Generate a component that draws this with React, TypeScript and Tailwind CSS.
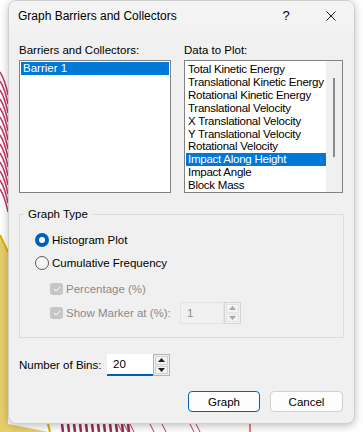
import { useState } from 'react'

const DATA_ITEMS = [
  'Total Kinetic Energy',
  'Translational Kinetic Energy',
  'Rotational Kinetic Energy',
  'Translational Velocity',
  'X Translational Velocity',
  'Y Translational Velocity',
  'Rotational Velocity',
  'Impact Along Height',
  'Impact Angle',
  'Block Mass',
]

const FONT = { fontFamily: '"Liberation Sans", Arial, sans-serif' }

function Backdrop() {
  // the plot window peeking out behind the dialog
  return (
    <svg className="absolute inset-0" width="363" height="432" viewBox="0 0 363 432">
      <rect width="363" height="432" fill="#ffffff" />
      <path d="M0 235 L8 250 L8 424 Q30 428 48 432 L0 432 Z" fill="#e6cf6a" />
      <path d="M0 235 L8 252" stroke="#d9b400" strokeWidth="2" />
      {Array.from({ length: 14 }).map((_, i) => (
        <path
          key={i}
          d={`M0 ${72 + i * 9} Q5 ${80 + i * 9} 8 ${95 + i * 9}`}
          stroke="#c8346a"
          strokeWidth="1.5"
          fill="none"
        />
      ))}
      <path d="M48 424 L50 432" stroke="#d9b400" strokeWidth="2" />
      {Array.from({ length: 12 }).map((_, i) => (
        <path
          key={'b' + i}
          d={`M${62 + i * 6} 424 L${63 + i * 6} 432`}
          stroke="#9b2a55"
          strokeWidth="2.5"
        />
      ))}
      {[118, 124, 130, 150, 162, 190, 196].map(x => (
        <path key={'c' + x} d={`M${x} 424 Q${x + 2} 428 ${x + 4} 432`} stroke="#c8346a" strokeWidth="1" fill="none" />
      ))}
      <path d="M250 424 L250 432" stroke="#d00000" strokeWidth="1" />
    </svg>
  )
}

function Spinner({ disabled }: { disabled?: boolean }) {
  const arrow = disabled ? 'fill-[#a8a8a8]' : 'fill-[#202020]'
  return (
    <div className={`flex flex-col w-[17px] h-full border ${disabled ? 'border-[#d5d5d5]' : 'border-[#b4b4b4]'} bg-[#f0f0f0] p-[1px] gap-[1px]`}>
      <div className={`flex-1 flex items-center justify-center border ${disabled ? 'border-[#e3e3e3]' : 'border-[#cfcfcf]'} bg-[#f3f3f3]`}>
        <svg width="7" height="4" viewBox="0 0 7 4" className={arrow}><path d="M3.5 0 L7 4 L0 4 Z" /></svg>
      </div>
      <div className={`flex-1 flex items-center justify-center border ${disabled ? 'border-[#e3e3e3]' : 'border-[#cfcfcf]'} bg-[#f3f3f3]`}>
        <svg width="7" height="4" viewBox="0 0 7 4" className={arrow}><path d="M0 0 L7 0 L3.5 4 Z" /></svg>
      </div>
    </div>
  )
}

function DisabledCheck({ label }: { label: string }) {
  return (
    <div className="flex items-center gap-[3px] whitespace-nowrap">
      <div className="w-[13px] h-[12px] rounded-[3px] bg-[#c6c6c6] flex items-center justify-center">
        <svg width="8" height="6" viewBox="0 0 8 6"><path d="M0.8 3 L3 5 L7.2 0.8" stroke="#ffffff" strokeWidth="1" fill="none" /></svg>
      </div>
      <span className="text-[#8a8a8a]">{label}</span>
    </div>
  )
}

function Radio({ checked, label, onClick }: { checked: boolean; label: string; onClick: () => void }) {
  return (
    <div className="flex items-center gap-[3px] cursor-default whitespace-nowrap h-[14px]" onClick={onClick}>
      {checked ? (
        <div className="w-[14px] h-[14px] rounded-full bg-[#005fb8] flex items-center justify-center">
          <div className="w-[6px] h-[6px] rounded-full bg-white" />
        </div>
      ) : (
        <div className="w-[14px] h-[14px] rounded-full border border-[#5a5a5a] bg-[#f6f6f6]" />
      )}
      <span>{label}</span>
    </div>
  )
}

export default function App() {
  const [selected, setSelected] = useState(7)
  const [graphType, setGraphType] = useState(0)
  const [bins, setBins] = useState('20')

  return (
    <div className="relative w-[363px] h-[432px] overflow-hidden text-[11.5px] text-black" style={FONT}>
      <Backdrop />

      <div className="absolute left-[8px] top-0 w-[347px] h-[424px] rounded-[8px] border border-[#cfcfcf] bg-[#f0f0f0] shadow-[0_2px_8px_rgba(0,0,0,0.25)] overflow-hidden flex flex-col">
        {/* title bar */}
        <div className="h-[30px] shrink-0 bg-[#f3f3f3] flex items-center pl-[9px] text-[12px] leading-[16px] whitespace-nowrap">
          <span className="flex-1">Graph Barriers and Collectors</span>
          <span className="w-[20px] text-center mr-[30px] text-[13px]">?</span>
          <svg width="10" height="10" viewBox="0 0 10 10" className="mr-[18px]">
            <path d="M0.5 0.5 L9.5 9.5 M9.5 0.5 L0.5 9.5" stroke="#1a1a1a" strokeWidth="1" />
          </svg>
        </div>

        <div className="flex flex-col px-[10px] leading-[16px] whitespace-nowrap">
          {/* lists */}
          <div className="flex gap-[13px] mt-[11px]">
            <div className="flex flex-col w-[152px]">
              <span className="mb-[2px]">Barriers and Collectors:</span>
              <div className="h-[133px] border border-[#828282] bg-white p-[1px]">
                <div className="h-[13px] leading-[13px] bg-[#0078d7] text-white pl-[2px]">Barrier 1</div>
              </div>
            </div>
            <div className="flex flex-col w-[159px]">
              <span className="mb-[2px]">Data to Plot:</span>
              <div className="h-[133px] border border-[#828282] bg-white flex overflow-hidden">
                <div className="flex-1 flex flex-col pt-[2px] pl-[1px] min-w-0">
                  {DATA_ITEMS.map((item, i) => (
                    <div
                      key={item}
                      onClick={() => setSelected(i)}
                      className={`h-[13px] leading-[13px] pl-[2px] tracking-[-0.25px] cursor-default overflow-hidden ${selected === i ? 'bg-[#0078d7] text-white' : ''}`}
                    >
                      {item}
                    </div>
                  ))}
                </div>
                <div className="w-[16px] shrink-0 bg-[#f0f0f0] flex justify-center pt-[17px]">
                  <div className="w-[2px] h-[79px] bg-[#8a8a8a]" />
                </div>
              </div>
            </div>
          </div>

          {/* graph type */}
          <div className="relative mt-[21px] border border-[#dcdcdc] pl-[15px] pb-[13px] pt-[18px]">
            <span className="absolute left-[4px] top-[-9px] px-[4px] bg-[#f0f0f0]">Graph Type</span>
            <div className="flex flex-col gap-[9px]">
              <Radio checked={graphType === 0} label="Histogram Plot" onClick={() => setGraphType(0)} />
              <Radio checked={graphType === 1} label="Cumulative Frequency" onClick={() => setGraphType(1)} />
            </div>
            <div className="flex flex-col pl-[15px] mt-[11px] gap-[5px]">
              <DisabledCheck label="Percentage (%)" />
              <div className="flex items-center">
                <div className="w-[130px]">
                  <DisabledCheck label="Show Marker at (%):" />
                </div>
                <div className="flex h-[22px]">
                  <div className="w-[44px] border border-[#e3e3e3] bg-[#f0f0f0] text-[#8a8a8a] pl-[6px] leading-[20px]">1</div>
                  <Spinner disabled />
                </div>
              </div>
            </div>
          </div>

          {/* bins */}
          <div className="flex items-center mt-[16px]">
            <span className="w-[88px]">Number of Bins:</span>
            <div className="flex h-[22px]">
              <div className="w-[46px] bg-white border-b-2 border-[#005fb8] flex items-center">
                <input
                  value={bins}
                  onChange={e => setBins(e.target.value)}
                  className="w-full bg-transparent outline-none pl-[6px] text-[11.5px]"
                  style={FONT}
                />
              </div>
              <Spinner />
            </div>
          </div>

          {/* buttons */}
          <div className="flex justify-end gap-[10px] mt-[15px] pr-[1px]">
            <button className="w-[72px] h-[21px] rounded-[4px] border border-[#005fb8] bg-[#fdfdfd] text-[11.5px] leading-[16px]">Graph</button>
            <button className="w-[73px] h-[21px] rounded-[4px] border border-[#d0d0d0] bg-[#fdfdfd] text-[11.5px] leading-[16px]">Cancel</button>
          </div>
        </div>
      </div>
    </div>
  )
}
